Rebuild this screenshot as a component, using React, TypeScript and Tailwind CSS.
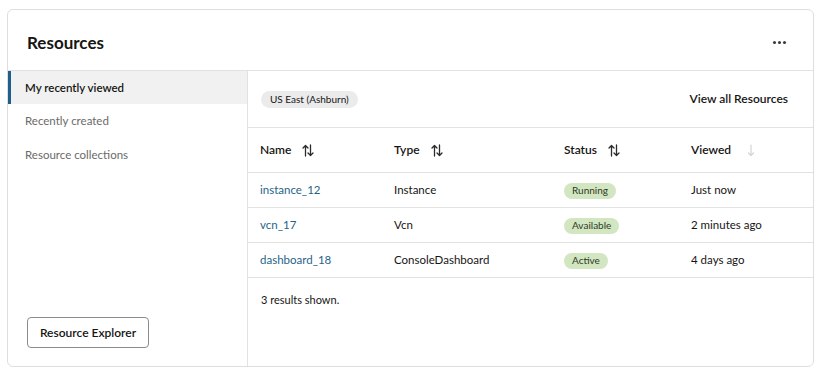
import React from "react";

const rows = [
  { name: "instance_12", type: "Instance", status: "Running", viewed: "Just now" },
  { name: "vcn_17", type: "Vcn", status: "Available", viewed: "2 minutes ago" },
  { name: "dashboard_18", type: "ConsoleDashboard", status: "Active", viewed: "4 days ago" },
];

function SortIcon() {
  return (
    <svg width="12" height="13" viewBox="0 0 12 13" fill="none" stroke="#2b2b2b" strokeWidth="1.3" strokeLinecap="round" strokeLinejoin="round">
      <path d="M3.5 12V1.5M1 4L3.5 1.5L6 4" />
      <path d="M8.5 1V11.5M6 9L8.5 11.5L11 9" />
    </svg>
  );
}

function DownIcon() {
  return (
    <svg width="10" height="13" viewBox="0 0 10 13" fill="none" stroke="#d4d4d4" strokeWidth="1.2" strokeLinecap="round" strokeLinejoin="round">
      <path d="M5 1V11.5M2.5 9L5 11.5L7.5 9" />
    </svg>
  );
}

export default function App() {
  const cols = ["w-[134px]", "w-[170px]", "w-[127px]", "flex-1"];

  return (
    <div className="w-[822px] h-[375px] bg-white pt-[9px] pl-[7px] font-['Lato',sans-serif] text-[#161513]">
      <div className="w-[807px] h-[358px] border border-[#dedede] rounded-[6px] flex flex-col overflow-hidden">
        {/* Header */}
        <div className="h-[61px] shrink-0 flex items-center justify-between pl-[19px] pr-[27px] border-b border-[#e2e2e2]">
          <h1 className="text-[17px] font-bold pt-[5px]">Resources</h1>
          <div className="flex gap-[2px] pt-[5px]">
            <span className="w-[3px] h-[3px] rounded-full bg-[#3a3a3a]" />
            <span className="w-[3px] h-[3px] rounded-full bg-[#3a3a3a]" />
            <span className="w-[3px] h-[3px] rounded-full bg-[#3a3a3a]" />
          </div>
        </div>

        <div className="flex flex-1 min-h-0">
          {/* Sidebar */}
          <div className="w-[240px] shrink-0 border-r border-[#e2e2e2] flex flex-col justify-between pb-[18px]">
            <div className="flex flex-col">
              <div className="h-[33px] flex items-center pl-[14px] bg-[#f1f1f1] border-l-[3px] border-[#1f5f8b] text-[11.5px] font-semibold">
                My recently viewed
              </div>
              <div className="h-[34px] flex items-center pl-[14px] border-l-[3px] border-transparent text-[11.5px] text-[#6b6a68]">
                Recently created
              </div>
              <div className="h-[33px] flex items-center pl-[14px] border-l-[3px] border-transparent text-[11.5px] text-[#6b6a68]">
                Resource collections
              </div>
            </div>
            <div className="pl-[19px]">
              <button className="w-[122px] h-[31px] border border-[#8c8c8c] rounded-[4px] text-[12px] font-semibold">
                Resource Explorer
              </button>
            </div>
          </div>

          {/* Main */}
          <div className="flex-1 flex flex-col">
            <div className="h-[57px] shrink-0 flex items-center justify-between pl-[13px] pr-[25px] border-b border-[#e2e2e2]">
              <span className="h-[17px] px-[9px] rounded-full bg-[#ebebeb] text-[10px] flex items-center mt-[1px]">
                US East (Ashburn)
              </span>
              <span className="text-[12px] font-semibold">View all Resources</span>
            </div>

            <div className="h-[45px] flex items-center border-b border-[#e2e2e2] text-[12px] font-semibold">
              <div className={`${cols[0]} pl-[12px] flex items-center gap-[11px]`}>
                Name <SortIcon />
              </div>
              <div className={`${cols[1]} pl-[12px] flex items-center gap-[11px]`}>
                Type <SortIcon />
              </div>
              <div className={`${cols[2]} pl-[12px] flex items-center gap-[11px]`}>
                Status <SortIcon />
              </div>
              <div className={`${cols[3]} pl-[12px] flex items-center gap-[15px]`}>
                Viewed <DownIcon />
              </div>
            </div>

            {rows.map((r) => (
              <div key={r.name} className="h-[35px] flex items-center border-b border-[#e2e2e2] text-[11.5px]">
                <div className={`${cols[0]} pl-[12px] text-[#1f6488]`}>{r.name}</div>
                <div className={`${cols[1]} pl-[12px]`}>{r.type}</div>
                <div className={`${cols[2]} pl-[12px]`}>
                  <span className="inline-flex items-center h-[16px] px-[8px] rounded-full bg-[#d3e6c2] text-[10px] text-[#2d3a22]">
                    {r.status}
                  </span>
                </div>
                <div className={`${cols[3]} pl-[12px]`}>{r.viewed}</div>
              </div>
            ))}

            <div className="pl-[13px] pt-[14px] text-[11px]">3 results shown.</div>
          </div>
        </div>
      </div>
    </div>
  );
}
